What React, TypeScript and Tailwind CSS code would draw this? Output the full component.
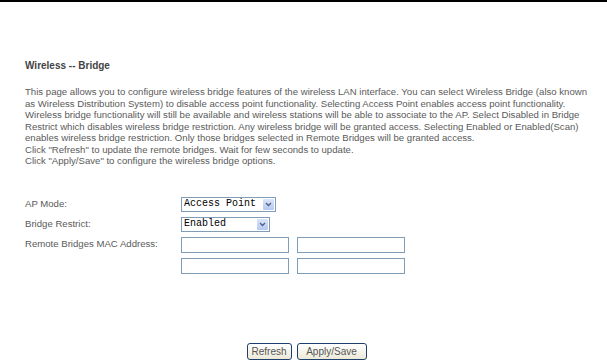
import React from "react";

const LINES = [
  "This page allows you to configure wireless bridge features of the wireless LAN interface. You can select Wireless Bridge (also known",
  "as Wireless Distribution System) to disable access point functionality. Selecting Access Point enables access point functionality.",
  "Wireless bridge functionality will still be available and wireless stations will be able to associate to the AP. Select Disabled in Bridge",
  "Restrict which disables wireless bridge restriction. Any wireless bridge will be granted access. Selecting Enabled or Enabled(Scan)",
  "enables wireless bridge restriction. Only those bridges selected in Remote Bridges will be granted access.",
  'Click "Refresh" to update the remote bridges. Wait for few seconds to update.',
  'Click "Apply/Save" to configure the wireless bridge options.',
];

function Select({ value, width }: { value: string; width: string }) {
  return (
    <div className={`flex h-[15px] items-center justify-between border border-[#7f9db9] bg-white pl-[2px] pr-[1px] ${width}`}>
      <span className="font-['Liberation_Mono',monospace] text-[10px] leading-none text-black">{value}</span>
      <span className="flex h-[11px] w-[11px] items-center justify-center rounded-[1px] bg-gradient-to-b from-[#dce6fa] to-[#b4c8f0]">
        <svg width="7" height="5" viewBox="0 0 7 5">
          <path d="M1 1 L3.5 3.5 L6 1" stroke="#4d6185" strokeWidth="1.3" fill="none" />
        </svg>
      </span>
    </div>
  );
}

function TextBox() {
  return <div className="h-[16px] w-[108px] border border-[#7f9db9] bg-white" />;
}

function Button({ label, width }: { label: string; width: string }) {
  return (
    <div className={`flex h-[17px] items-center justify-center rounded-[3px] border border-[#1c3f6e] bg-gradient-to-b from-white to-[#ece9d8] text-[10px] text-[#555] ${width}`}>
      {label}
    </div>
  );
}

export default function App() {
  return (
    <div className="h-[360px] w-[607px] overflow-hidden bg-white font-['Liberation_Sans',Arial,sans-serif]">
      <div className="h-[2px] bg-black" />
      <div className="pl-[25px] pt-[57px]">
        <div className="text-[10px] font-bold leading-[14px] text-[#444]">Wireless -- Bridge</div>
        <div className="mt-[13px] text-[9.6px] leading-[11.5px] text-[#5a5a5a]">
          {LINES.map((l, i) => (
            <div key={i} className="whitespace-nowrap">{l}</div>
          ))}
        </div>

        <div className="mt-[30px] grid grid-cols-[156px_auto] items-center gap-y-[5px] text-[9.6px] text-[#5a5a5a]">
          <div>AP Mode:</div>
          <Select value="Access Point" width="w-[95px]" />
          <div>Bridge Restrict:</div>
          <Select value="Enabled" width="w-[89px]" />
          <div>Remote Bridges MAC Address:</div>
          <div className="flex gap-[8px]">
            <TextBox />
            <TextBox />
          </div>
          <div />
          <div className="flex gap-[8px]">
            <TextBox />
            <TextBox />
          </div>
        </div>
      </div>

      <div className="mt-[69px] flex justify-center gap-[5px] pl-[6px]">
        <Button label="Refresh" width="w-[45px]" />
        <Button label="Apply/Save" width="w-[70px]" />
      </div>
    </div>
  );
}
